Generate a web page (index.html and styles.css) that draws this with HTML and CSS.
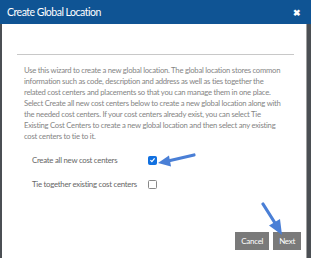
FILE: index.html
```html
<!DOCTYPE html>
<html lang="en">
<head>
    <meta charset="UTF-8">
    <title>Create Global Location</title>
    <link rel="stylesheet" href="styles.css">
</head>
<body>
    <div class="modal">
        <div class="modal-header">
            <span class="title">Create Global Location</span>
            <span class="close">&#x2716;</span>
        </div>
        <div class="modal-body">
            <hr class="rule">
            <p class="intro">Use this wizard to create a new global location. The global location stores common information such as code, description and address as well as ties together the related cost centers and placements so that you can manage them in one place. Select Create all new cost centers below to create a new global location along with the needed cost centers. If your cost centers already exist, you can select Tie Existing Cost Centers to create a new global location and then select any existing cost centers to tie to it.</p>
            <div class="option">
                <span class="label">Create all new cost centers</span>
                <span class="box checked">
                    <svg viewBox="0 0 8 8" width="8" height="8"><path d="M1.6 4.2 L3.3 5.8 L6.4 2.2" fill="none" stroke="#fff" stroke-width="1.4"/></svg>
                </span>
            </div>
            <div class="option">
                <span class="label">Tie together existing cost centers</span>
                <span class="box"></span>
            </div>
            <div class="footer">
                <button class="btn">Cancel</button>
                <button class="btn">Next</button>
            </div>
        </div>
        <svg class="arrow arrow-left" width="40" height="16" viewBox="0 0 40 16">
            <path d="M38 2 L12 8" stroke="#4a7fd6" stroke-width="3.2" stroke-linecap="round" fill="none"/>
            <path d="M2 10 L13 2.5 L15 13.5 Z" fill="#4a7fd6"/>
        </svg>
        <svg class="arrow arrow-down" width="26" height="36" viewBox="0 0 26 36">
            <path d="M3 2 L15 21" stroke="#4a7fd6" stroke-width="3.2" stroke-linecap="round" fill="none"/>
            <path d="M22 33 L9 23.5 L20 17 Z" fill="#4a7fd6"/>
        </svg>
    </div>
</body>
</html>
```

FILE: styles.css
```css
body {
    margin: 0;
    background: #4b4f54;
    font-family: 'Lato', sans-serif;
    height: 258px;
    overflow: hidden;
}
.modal {
    position: relative;
    display: flex;
    flex-direction: column;
    height: 258px;
}
.modal-header {
    background: #0f5494;
    color: #fff;
    height: 24px;
    display: flex;
    align-items: center;
    justify-content: space-between;
    padding: 0 10px 0 7px;
    flex-shrink: 0;
}
.title {
    font-size: 10.5px;
    letter-spacing: -0.5px;
}
.close {
    font-size: 9px;
    font-weight: bold;
}
.modal-body {
    flex: 1;
    background: #fff;
    margin: 0 4px 0 2px;
    border-right: 1px solid #a0a0a0;
    padding: 0 5px 0 15px;
    display: flex;
    flex-direction: column;
}
.rule {
    border: none;
    border-top: 1px solid #c8c8c8;
    margin: 30px 7px 0 0;
}
.intro {
    color: #858585;
    font-size: 7.7px;
    letter-spacing: -0.25px;
    line-height: 11px;
    margin: 10px 15px 0 7px;
}
.option {
    display: flex;
    align-items: center;
    margin-left: 15px;
    height: 10px;
    margin-top: 13px;
}
.option + .option {
    margin-top: 14px;
}
.label {
    color: #666;
    font-size: 7.8px;
    letter-spacing: -0.25px;
    width: 116px;
    white-space: nowrap;
}
.box {
    width: 7px;
    height: 7px;
    border: 1px solid #888;
    border-radius: 1.5px;
    display: flex;
    align-items: center;
    justify-content: center;
}
.box.checked {
    background: #1170e0;
    border-color: #1170e0;
}
.footer {
    margin-top: auto;
    margin-bottom: 8px;
    display: flex;
    justify-content: flex-end;
    gap: 4px;
}
.btn {
    background: #7a7a7a;
    color: #fff;
    border: none;
    font-family: 'Lato', sans-serif;
    font-size: 8px;
    letter-spacing: -0.3px;
    height: 18px;
    padding: 0 6px;
    cursor: pointer;
}
.arrow {
    position: absolute;
    pointer-events: none;
}
.arrow-left {
    left: 156px;
    top: 153px;
}
.arrow-down {
    left: 260px;
    top: 202px;
}
```
